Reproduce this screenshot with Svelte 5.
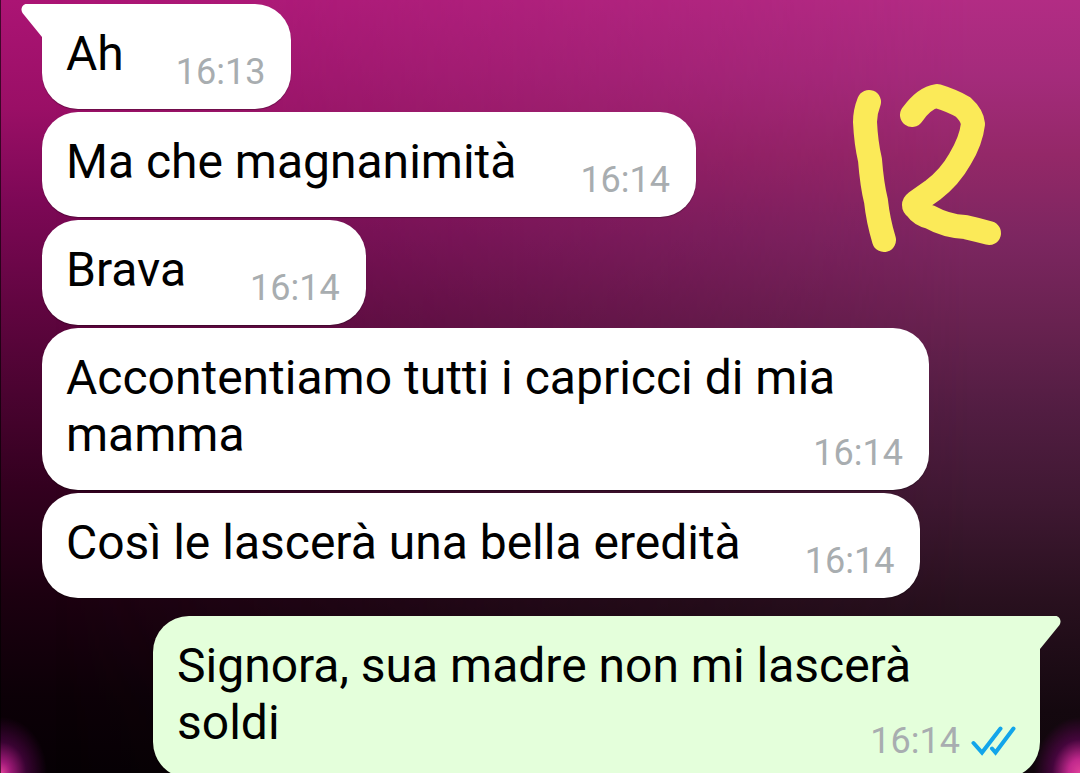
<script>
  const messages = [
    { text: 'Ah', time: '16:13', first: true, short: true },
    { text: 'Ma che magnanimità', time: '16:14' },
    { text: 'Brava', time: '16:14' },
    { text: 'Accontentiamo tutti i capricci di mia mamma', time: '16:14' },
    { text: 'Così le lascerà una bella eredità', time: '16:14' },
    { text: 'Signora, sua madre non mi lascerà soldi', time: '16:14', first: true, out: true }
  ];
</script>

<main class="chat">
  <ol class="messages">
    {#each messages as msg}
      <li class="bubble" class:first={msg.first} class:out={msg.out} class:short={msg.short}>
        {#if msg.first}
          <svg class="tail" viewBox="0 0 22 34" aria-hidden="true">
            <path d="M22 0H5.500C1.500 0-1 5 1.500 9L21 33H22Z" />
          </svg>
        {/if}
        <span>{msg.text}</span><span class="meta">
          <time>{msg.time}</time>
          {#if msg.out}
            <svg class="ticks" viewBox="0 0 46 30" role="img" aria-label="Letto">
              <path d="M3.500 17L12 26.500L30.500 2.500M22 22.500L25.500 26.500L43.500 2.500" />
            </svg>
          {/if}
        </span>
      </li>
    {/each}
  </ol>

  <svg class="doodle" viewBox="850 82 154 172" aria-hidden="true">
    <path d="M869 102Q865 112 865 122Q866 143 870 160Q872 185 876 201Q878 220 884 240" />
    <path d="M912 115Q924 98 937 96Q953 101 963 107Q972 115 973 124Q971 141 960 159Q950 177 933 190L916 202Q912 205 916 208Q921 215 930 217Q946 226 965 227Q978 230 989 233" />
  </svg>
</main>

<style>
  :global(body) {
    margin: 0;
    background: #000;
  }

  .chat {
    position: relative;
    box-sizing: border-box;
    height: 100vh;
    overflow: hidden;
    padding: 4px 40px 0 42px;
    font-family: Roboto, sans-serif;
    background: linear-gradient(180deg, #ab1474 0%, #9a0f66 14%, #7d0856 26%, #620541 39%, #4a0330 51%, #33001f 63%, #1c0010 77%, #0c0007 90%, #060004 100%);
  }

  /* softer wallpaper tone towards the right side */
  .chat::before {
    content: '';
    position: absolute;
    inset: 0;
    background: linear-gradient(180deg, #b22c84 0%, #a42b7b 10%, #942868 20%, #7c2660 31%, #682250 42%, #521d42 53%, #3f1832 65%, #28101e 78%, #14080f 92%, #10060c 100%);
    mask-image: linear-gradient(90deg, transparent 5%, #000 90%);
  }

  /* glow in the bottom corners, thin dark line on the left */
  .chat::after {
    content: '';
    position: absolute;
    inset: 0;
    background:
      radial-gradient(ellipse 46px 56px at 0 100%, #e0409a 0%, #a01a78 20%, rgba(90, 5, 80, 0.6) 55%, rgba(60, 0, 60, 0) 100%),
      radial-gradient(ellipse 46px 56px at 100% 100%, #e0409a 0%, #c0288c 25%, rgba(90, 5, 80, 0.7) 60%, rgba(60, 0, 60, 0) 100%);
    border-left: 1px solid rgba(0, 0, 0, 0.6);
  }

  .messages {
    position: relative;
    z-index: 1;
    display: flex;
    flex-direction: column;
    align-items: flex-start;
    gap: 3px;
    margin: 0;
    padding: 0;
    list-style: none;
  }

  .bubble {
    position: relative;
    display: flow-root;
    box-sizing: border-box;
    max-width: calc(100% - 111px);
    padding: 21px 26px 16px 24px;
    border-radius: 36px;
    background: #fff;
    color: #000;
    font-size: 48px;
    line-height: 57px;
    box-shadow: 0 1px 1px rgba(0, 0, 0, 0.3);
  }

  .bubble.first {
    border-top-left-radius: 0;
  }

  .bubble.out {
    align-self: flex-end;
    margin-top: 15px;
    padding-right: 24px;
    border-radius: 36px 0 36px 36px;
    background: #e4ffdb;
  }

  .tail {
    position: absolute;
    top: 0;
    left: -21px;
    width: 22px;
    height: 34px;
    fill: #fff;
  }

  .out .tail {
    left: auto;
    right: -21px;
    transform: scaleX(-1);
    fill: #e4ffdb;
  }

  /* floats to the end of the last line */
  .meta {
    float: right;
    display: flex;
    align-items: center;
    gap: 10px;
    margin: 26px 0 0 64px;
    color: #a8adb0;
    font-size: 36px;
    line-height: 42px;
  }

  .short .meta {
    margin-left: 52px;
  }

  .ticks {
    width: 46px;
    height: 30px;
    fill: none;
    stroke: #12a5ea;
    stroke-width: 4;
    stroke-linecap: round;
  }

  .doodle {
    position: absolute;
    z-index: 2;
    top: 82px;
    right: 76px;
    width: 154px;
    height: 172px;
    fill: none;
    stroke: #fbea58;
    stroke-width: 24;
    stroke-linecap: round;
    stroke-linejoin: round;
  }
</style>
